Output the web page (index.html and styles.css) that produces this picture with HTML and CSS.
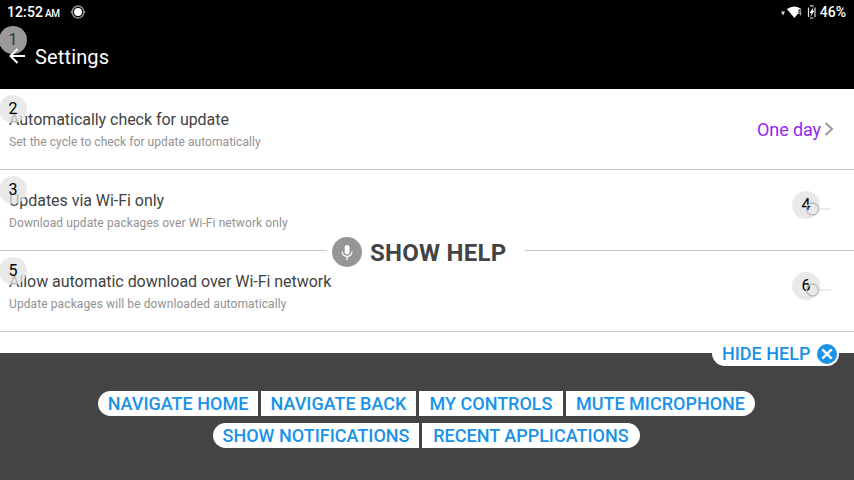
FILE: index.html
```html
<!DOCTYPE html>
<html lang="en">
<head>
<meta charset="utf-8">
<title>Settings</title>
<link rel="stylesheet" href="styles.css">
</head>
<body>
<div class="screen">
  <header class="top">
    <div class="status">
      <span class="clock">12:52</span><span class="ampm">AM</span>
      <svg class="disc" width="16" height="16" viewBox="0 0 16 16"><circle cx="8" cy="8" r="5.900" fill="none" stroke="#8c8c8c" stroke-width="1.500"/><path d="M.8 8h2M13.200 8h2" stroke="#aaa" stroke-width="1.500"/><circle cx="8" cy="8" r="4" fill="#fff"/></svg>
      <span class="spacer"></span>
      <svg class="signal" width="38" height="18" viewBox="0 0 38 18"><path d="M1 8.500h4L3 12.500z" fill="#ddd"/><path d="M6.800 6Q14.500 1 21.500 6L14.500 15z" fill="#fff"/><path d="M19.500 6.500v4h3M21.300 6.500v6" fill="none" stroke="#000" stroke-width="2"/><path d="M20.500 7l-2.500 3.500h4M20.500 7v5.500" fill="none" stroke="#999" stroke-width="1"/><path d="M30 2.800h3.500M28.500 4.500V14M30 15h3.500M35 4.500V14" fill="none" stroke="#ddd" stroke-width="1.200"/><path d="M33.500 4l-4 6h2l-1 4 4-6.500h-2z" fill="#fff"/></svg>
      <span class="battery">46%</span>
    </div>
    <div class="bar">
      <svg class="back" width="17" height="16" viewBox="0 0 17 16"><path d="M16 8H2M8.500 1L1.500 8l7 7" fill="none" stroke="#fff" stroke-width="2"/></svg>
      <h1>Settings</h1>
    </div>
    <span class="badge badge-dark">1</span>
  </header>
  <main>
    <section class="row">
      <div class="label"><h2 class="t1">Automatically check for update</h2><p class="p1">Set the cycle to check for update automatically</p></div>
      <span class="value">One day</span>
      <svg class="chevron" width="10" height="14" viewBox="0 0 10 14"><path d="M1.500 1L8 7l-6.500 6" fill="none" stroke="#999" stroke-width="2"/></svg>
      <span class="badge">2</span>
    </section>
    <section class="row">
      <div class="label"><h2 class="t2">Updates via Wi-Fi only</h2><p class="p2">Download update packages over Wi-Fi network only</p></div>
      <svg class="switch" width="26" height="16" viewBox="0 0 26 16"><path d="M14 8h12" stroke="#e4e4e4" stroke-width="1.500"/><circle cx="7.500" cy="8" r="6" fill="none" stroke="#bdbdbd" stroke-width="1.300"/></svg>
      <span class="badge">3</span><span class="badge badge-switch">4</span>
    </section>
    <section class="row">
      <div class="label"><h2 class="t3">Allow automatic download over Wi-Fi network</h2><p class="p3">Update packages will be downloaded automatically</p></div>
      <svg class="switch" width="26" height="16" viewBox="0 0 26 16"><path d="M14 8h12" stroke="#e4e4e4" stroke-width="1.500"/><circle cx="7.500" cy="8" r="6" fill="none" stroke="#bdbdbd" stroke-width="1.300"/></svg>
      <span class="badge">5</span><span class="badge badge-switch">6</span>
    </section>
  </main>
  <div class="toast">
    <svg width="30" height="30" viewBox="0 0 30 30"><circle cx="15" cy="15" r="15" fill="#969696"/><rect x="12.700" y="8" width="4.800" height="9.500" rx="2.400" fill="#fff"/><path d="M10.200 14.500a4.900 4.900 0 0 0 9.800 0M15.100 19.400V23" fill="none" stroke="#fff" stroke-width="1.300"/></svg>
    <span>SHOW HELP</span>
  </div>
  <footer class="panel">
    <div class="hide"><span>HIDE HELP</span><svg width="20" height="20" viewBox="0 0 20 20"><circle cx="10" cy="10" r="10" fill="#1a92e8"/><path d="M5.300 5.300l9.400 9.400M14.700 5.300l-9.400 9.400" stroke="#fff" stroke-width="2.400"/></svg></div>
    <div class="commands"><span class="b1">NAVIGATE HOME</span><span class="b2">NAVIGATE BACK</span><span class="b3">MY CONTROLS</span><span class="b4">MUTE MICROPHONE</span></div>
    <div class="commands"><span class="b5">SHOW NOTIFICATIONS</span><span class="b6">RECENT APPLICATIONS</span></div>
  </footer>
</div>
</body>
</html>
```
FILE: styles.css
```css
* { box-sizing: border-box; }
body { margin: 0; font-family: Roboto, sans-serif; }
h1, h2, p { margin: 0; font-weight: 400; white-space: nowrap; }
svg { display: block; flex: none; }
.screen { position: relative; width: 854px; height: 480px; overflow: hidden; background: #fff; display: flex; flex-direction: column; }
.top { position: relative; z-index: 0; height: 89px; background: #000; color: #fff; }
.status { display: flex; align-items: center; height: 24px; padding: 0 8px 0 7px; font-weight: 500; font-size: 14px; }
.clock { letter-spacing: .1px; }
.ampm { font-size: 10px; margin: 3px 0 0 2px; letter-spacing: -.3px; }
.disc { margin-left: 10px; }
.spacer { flex: 1; }
.signal { margin-right: 2px; }
.bar { display: flex; align-items: center; height: 65px; padding-left: 9px; }
.back { margin-top: -1px; }
.bar h1 { font-size: 20px; margin-left: 9px; line-height: 24px; letter-spacing: .15px; }
.row { position: relative; display: flex; align-items: center; height: 81px; padding: 0 20px 0 9px; border-bottom: 1px solid #c8c8c8; }
.label { flex: 1; align-self: flex-start; padding-top: 21px; }
.label h2 { font-size: 16px; line-height: 20px; color: #424242; letter-spacing: -.04px; }
.label p { font-size: 12px; line-height: 16px; margin-top: 4px; color: #929292; letter-spacing: .1px; }
.label .p1 { letter-spacing: .06px; }
.value { font-size: 18px; color: #9328ee; margin-right: 3px; letter-spacing: -.1px; }
.switch { position: relative; z-index: 1; margin: -2px 3px 0 0; }
.badge { position: absolute; left: -1px; top: 6px; width: 28px; height: 28px; border-radius: 50%; background: rgba(225,225,225,.75); color: #000; font-size: 16px; line-height: 28px; text-align: center; }
.badge-dark { top: 26px; background: #999; color: #333; z-index: -1; }
.badge-switch { left: 792px; top: 21px; }
.toast { position: absolute; left: 327px; top: 232px; width: 198px; height: 40px; padding-left: 5px; background: #fff; display: flex; align-items: center; gap: 8px; font-size: 24px; font-weight: 700; letter-spacing: .25px; color: #444; white-space: nowrap; }
.toast span { margin-top: 2px; }
.panel { position: absolute; left: 0; top: 353px; width: 854px; height: 127px; padding-top: 38px; background: #444; border-bottom: 1px solid #49414a; color: #1a92e8; font-size: 18px; font-weight: 500; }
.hide { position: absolute; left: 712px; top: -12px; width: 127px; height: 25px; border-radius: 0 12px 12px 13px; background: #fff; display: flex; align-items: center; justify-content: space-between; padding: 0 2px 0 10px; white-space: nowrap; }
.commands { display: flex; justify-content: center; gap: 3px; height: 25px; margin: 0 1px 7px 0; }
.commands span { background: #fff; line-height: 26px; text-align: center; white-space: nowrap; }
.commands span:first-child { border-radius: 13px 0 0 13px; }
.commands span:last-child { border-radius: 0 13px 13px 0; }
.b1 { width: 160px; } .b2 { width: 155px; } .b3 { width: 144px; } .b4 { width: 189px; }
.b5 { width: 206px; } .b6 { width: 218px; }
```
